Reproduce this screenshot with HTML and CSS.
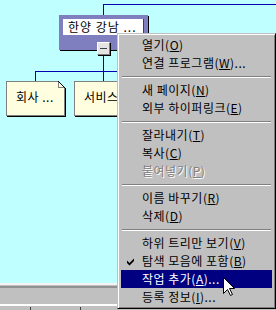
FILE: index.html
```html
<!DOCTYPE html>
<html>
<head>
    <title>탐색 보기</title>
    <meta charset="utf-8">
    <link rel="stylesheet" href="styles.css">
</head>
<body>
    <div class="screen">
        <div class="canvas">
            <div class="line line-top"></div>
            <div class="line line-root"></div>
            <div class="line line-down"></div>
            <div class="line line-bar"></div>
            <div class="line line-left"></div>

            <div class="node-main">
                <div class="node-label">한양 강남 ...</div>
            </div>
            <div class="toggle"><span class="minus"></span></div>

            <div class="node-child node-first">
                회사 ...
                <svg class="dog-ear" width="8" height="8" viewBox="0 0 8 8" shape-rendering="crispEdges">
                    <polygon points="0,0 8,0 8,8" fill="#c0ffff"/>
                    <polygon points="0.5,0.5 0.5,6.5 6.5,6.5" fill="#ffffe0" stroke="#808080"/>
                    <line x1="0.5" y1="0.5" x2="7.5" y2="7.5" stroke="#000"/>
                    <line x1="6.5" y1="6.5" x2="6.5" y2="8" stroke="#808080"/>
                    <line x1="7.5" y1="7" x2="7.5" y2="8" stroke="#000"/>
                </svg>
            </div>
            <div class="node-child node-second">서비스 ...</div>
        </div>
        <div class="hscroll"></div>
        <div class="status">
            <span class="panel panel-first"></span>
            <span class="panel panel-mid"></span>
            <span class="panel"></span>
        </div>

        <ul class="menu">
            <li class="item">열기(<u>O</u>)</li>
            <li class="item">연결 프로그램(<u>W</u>)...</li>
            <li class="sep"></li>
            <li class="item">새 페이지(<u>N</u>)</li>
            <li class="item">외부 하이퍼링크(<u>E</u>)</li>
            <li class="sep"></li>
            <li class="item">잘라내기(<u>T</u>)</li>
            <li class="item">복사(<u>C</u>)</li>
            <li class="item disabled">붙여넣기(<u>P</u>)</li>
            <li class="sep"></li>
            <li class="item">이름 바꾸기(<u>R</u>)</li>
            <li class="item">삭제(<u>D</u>)</li>
            <li class="sep"></li>
            <li class="item">하위 트리만 보기(<u>V</u>)</li>
            <li class="item">
                <svg class="check" width="8" height="8" viewBox="0 0 8 8">
                    <polygon points="0,2.5 2.5,5 7,0.5 7,3 2.5,7.5 0,5" fill="#000"/>
                </svg>
                탐색 모음에 포함(<u>B</u>)
            </li>
            <li class="item active">작업 추가(<u>A</u>)...</li>
            <li class="item">등록 정보(<u>I</u>)...</li>
        </ul>

        <svg class="cursor" width="13" height="20" viewBox="0 0 13 20">
            <polygon points="0.5,0.5 0.5,16.5 4.5,12.5 7.5,18.5 9.5,17.5 6.5,11.5 11.5,11.5" fill="#fff" stroke="#000"/>
        </svg>
    </div>
</body>
</html>
```

FILE: styles.css
```css
body {
    margin: 0;
    font-family: "Noto Sans CJK KR", "Noto Sans", sans-serif;
    font-size: 12px;
    letter-spacing: 0.5px;
    color: #000;
}
.screen {
    position: relative;
    width: 276px;
    height: 310px;
    overflow: hidden;
    background-color: #c0c0c0;
}
.canvas {
    position: relative;
    height: 283px;
    background-color: #c0ffff;
}
.line {
    position: absolute;
    background-color: #0000b0;
}
.line-top {
    left: 103px;
    top: 4px;
    width: 173px;
    height: 1px;
}
.line-root {
    left: 103px;
    top: 4px;
    width: 1px;
    height: 11px;
}
.line-down {
    left: 103px;
    top: 54px;
    width: 1px;
    height: 27px;
}
.line-bar {
    left: 35px;
    top: 71px;
    width: 170px;
    height: 1px;
}
.line-left {
    left: 35px;
    top: 71px;
    width: 1px;
    height: 10px;
}
.node-main {
    position: absolute;
    left: 59px;
    top: 15px;
    width: 89px;
    height: 35px;
    padding: 4px;
    box-sizing: border-box;
    background-color: #7f7fc0;
    box-shadow: 1px 1px 0 #000;
}
.node-label {
    height: 16px;
    line-height: 16px;
    padding-left: 5px;
    background-color: #fff;
    border-right: 1px solid #404040;
    white-space: nowrap;
    letter-spacing: 1px;
}
.toggle {
    position: absolute;
    left: 97px;
    top: 42px;
    width: 13px;
    height: 13px;
    box-sizing: border-box;
    display: flex;
    align-items: center;
    justify-content: center;
    background-color: #e4e4e4;
    border: 1px solid;
    border-color: #fff #808080 #808080 #fff;
    box-shadow: 1px 1px 0 #000;
}
.minus {
    width: 7px;
    height: 1px;
    background-color: #404040;
}
.node-child {
    position: absolute;
    top: 81px;
    width: 59px;
    height: 35px;
    box-sizing: border-box;
    padding: 7px 0 0 9px;
    line-height: 16px;
    background-color: #ffffe0;
    border: 1px solid #808080;
    box-shadow: 1px 1px 0 #000;
    white-space: nowrap;
}
.node-first {
    left: 6px;
}
.node-second {
    left: 74px;
}
.dog-ear {
    position: absolute;
    top: -1px;
    right: -2px;
}
.hscroll {
    height: 19px;
    border-top: 2px solid #f4f4f4;
    background-color: #c0c0c0;
    box-shadow: inset 0 1px 0 #c0c0c0, inset 0 3px 0 #909090;
}
.status {
    display: flex;
    height: 4px;
    border-top: 2px solid #fff;
    align-items: flex-end;
}
.panel {
    height: 3px;
    flex: 1;
    border-left: 1px solid #404040;
}
.panel-first {
    flex: none;
    width: 30px;
    border-left: none;
}
.panel-mid {
    flex: none;
    width: 49px;
}
.menu {
    position: absolute;
    left: 117px;
    top: 33px;
    width: 159px;
    margin: 0;
    padding: 2px 3px;
    box-sizing: border-box;
    list-style: none;
    background-color: #c0c0c0;
    border: 1px solid;
    border-color: #c0c0c0 #000 #000 #c0c0c0;
    box-shadow: inset 1px 1px 0 #fff, inset -1px -1px 0 #808080;
}
.item {
    position: relative;
    height: 18px;
    line-height: 18px;
    padding-left: 21px;
    white-space: nowrap;
}
.item u {
    text-underline-offset: 1px;
}
.item.disabled {
    color: #808080;
    text-shadow: 1px 1px 0 #fff;
}
.item.active {
    background-color: #000080;
    color: #fff;
}
.sep {
    height: 0;
    margin: 4px 1px 3px;
    border-top: 1px solid #808080;
    border-bottom: 1px solid #fff;
}
.check {
    position: absolute;
    left: 6px;
    top: 6px;
}
.cursor {
    position: absolute;
    left: 223px;
    top: 277px;
}
```
